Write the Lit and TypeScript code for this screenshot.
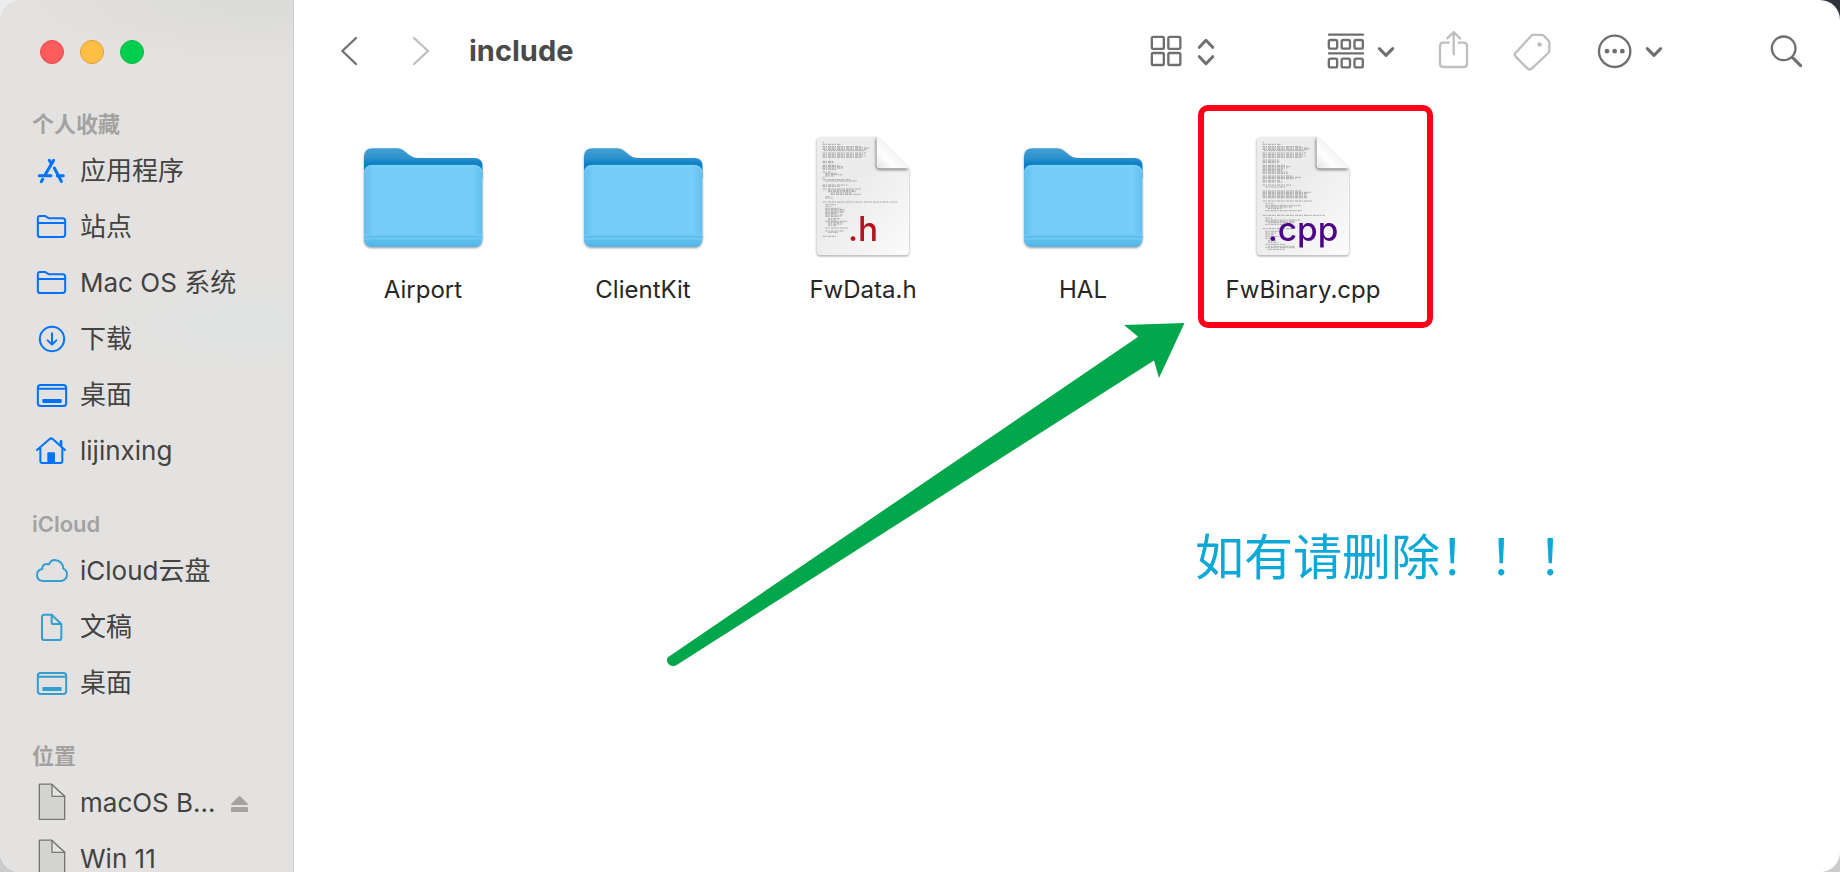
import { LitElement, html, svg, css, nothing, type TemplateResult } from "lit";
import { customElement, property } from "lit/decorators.js";

type Glyph = { box: string; art: TemplateResult };

const desktopGlyph: Glyph = {
  box: "108 267 96 96",
  art: svg`<rect x="113.500" y="285" width="85" height="63" rx="8"/><path d="M114 296H198"/><rect x="127" y="327" width="58" height="12" rx="2" fill="currentColor" stroke="none"/>`,
};

const folderGlyph: Glyph = {
  box: "108 633 96 96",
  art: svg`<path d="M113.500 704V655Q113.500 648 121 648H134Q137 648 140 651L143 653Q145 654.500 149 654.500H188Q195.500 654.500 195.500 662V703Q195.500 711 188 711H121Q113.500 711 113.500 704ZM114 669H195"/>`,
};

const diskGlyph: Glyph = {
  box: "108 621 96 96",
  art: svg`<path d="M118 612.500H155L194 649V718H118Z" fill="#d3d3d1" stroke-width="4"/><path d="M156 613V649H194Q174 633 156 613Z" fill="#e4e3e1" stroke-width="4"/>`,
};

const sideGlyphs: Record<string, Glyph> = {
  apps: {
    box: "108 465 96 96",
    art: svg`<g stroke-width="9"><path d="M148 481L153 489M161 481L135 525M163 504L184 544M118 527H153M172 527H190M128 538L124 545"/></g>`,
  },
  folder: folderGlyph,
  download: {
    box: "108 99 96 96",
    art: svg`<circle cx="156" cy="147" r="36.500"/><path d="M156 130V162M143 151L156 164L169 151"/>`,
  },
  desktop: desktopGlyph,
  home: {
    box: "108 435 96 96",
    art: svg`<path d="M111 480L149 447Q153.500 443 158 447L195 480M121 474V513Q121 519 127 519H181Q187 519 187 513V474"/><path d="M183 466V454" stroke-width="8"/><path d="M142 519V490Q142 487 145 487H162Q165 487 165 490V519Z" fill="currentColor" stroke="none"/>`,
  },
  cloud: {
    box: "108 795 96 96",
    art: svg`<path d="M128 873Q111 871 111 855Q112 839 127 837Q126 824 138 822Q143 821 147 823Q153 809 165 810Q188 812 190 836Q201 841 201 853Q201 870 184 873Z"/>`,
  },
  paper: {
    box: "108 93 96 96",
    art: svg`<path d="M126 173V111Q126 104 133 104H155L184 132V173Q184 180 177 180H133Q126 180 126 173ZM155 104V128Q155 132 160 132H184"/>`,
  },
  disk: diskGlyph,
};

const chevronDown = svg`<path d="M784 146L804 166L824 146" stroke-width="9"/>`;

const barGlyphs: Record<string, Glyph> = {
  back: { box: "117 93 120 120", art: svg`<path d="M198 114L157 153L198 192"/>` },
  forward: { box: "333 93 120 120", art: svg`<path d="M372 114L414 153L372 192"/>` },
  grid: {
    box: "81 93 120 120",
    art: svg`<rect x="98.500" y="110.500" width="36" height="36" rx="4"/><rect x="148" y="110.500" width="36" height="36" rx="4"/><rect x="98.500" y="159" width="36" height="36" rx="4"/><rect x="148" y="159" width="36" height="36" rx="4"/>`,
  },
  updown: { box: "228 93 60 120", art: svg`<path d="M238 142L258 121L278 142M238 170L258 191L278 170" stroke-width="9"/>` },
  group: {
    box: "621 93 120 120",
    art: svg`<path d="M630 104H732M630 160H732"/>${[629.5, 668, 706.5].map(
      (x) => svg`<rect x=${x} y="120" width="25" height="26" rx="5"/><rect x=${x} y="176" width="25" height="26" rx="5"/>`,
    )}`,
  },
  chevron: { box: "774 93 60 120", art: chevronDown },
  share: {
    box: "948 93 120 120",
    art: svg`<path d="M992 128H976Q966 128 966 138V191Q966 201 976 201H1037Q1047 201 1047 191V138Q1047 128 1037 128H1022M1007 163V97M988 115L1007 96L1026 115"/>`,
  },
  tag: {
    box: "96 93 120 120",
    art: svg`<path d="M158 104.500H184Q188 104.500 191 107L205 121Q208 124 208 128V151Q208 156 205 159L155 206Q149 210 143 206L107 170Q101 164 107 158L154 107Q156 104.500 158 104.500Z"/><circle cx="179" cy="133.500" r="7" fill="currentColor" stroke="none"/>`,
  },
  more: {
    box: "342 93 120 120",
    art: svg`<circle cx="404" cy="154" r="47"/>${[381, 404, 427].map(
      (x) => svg`<circle cx=${x} cy="153.500" r="7" fill="currentColor" stroke="none"/>`,
    )}`,
  },
  search: {
    box: "858 93 120 120",
    art: svg`<circle cx="911" cy="145" r="35.500"/><path d="M937 172L962 197" stroke-width="9"/>`,
  },
};

interface Place {
  label: string;
  icon: string;
  eject?: boolean;
}

const sections: { title: string; tone: string; places: Place[] }[] = [
  {
    title: "个人收藏",
    tone: "blue",
    places: [
      { label: "应用程序", icon: "apps" },
      { label: "站点", icon: "folder" },
      { label: "Mac OS 系统", icon: "folder" },
      { label: "下载", icon: "download" },
      { label: "桌面", icon: "desktop" },
      { label: "lijinxing", icon: "home" },
    ],
  },
  {
    title: "iCloud",
    tone: "cyan",
    places: [
      { label: "iCloud云盘", icon: "cloud" },
      { label: "文稿", icon: "paper" },
      { label: "桌面", icon: "desktop" },
    ],
  },
  {
    title: "位置",
    tone: "gray",
    places: [
      { label: "macOS B...", icon: "disk", eject: true },
      { label: "Win 11", icon: "disk" },
    ],
  },
];

/* Each run is [top, left, width] of one line of miniature source code. */
const headerLines: number[][] = [
  [95, 190, 5], [100, 190, 56], [107, 190, 118], [111, 190, 140], [115, 190, 132], [119, 194, 122],
  [126, 190, 130], [131, 190, 124], [135, 190, 128], [139, 190, 118],
  [151, 190, 32], [155, 190, 32], [163, 190, 48], [167, 190, 62], [171, 190, 62], [175, 190, 40],
  [183, 190, 24], [187, 198, 36], [191, 198, 50], [195, 198, 24], [199, 190, 6],
  [206, 190, 84], [210, 198, 96], [222, 190, 74], [226, 190, 50],
  [234, 190, 116], [238, 206, 80], [242, 206, 84], [246, 214, 64], [250, 214, 92], [257, 198, 16], [261, 198, 22],
  [273, 190, 226], [281, 198, 32], [286, 198, 18], [292, 198, 46], [296, 198, 56], [300, 198, 58], [304, 198, 56], [308, 198, 36], [312, 198, 54], [316, 198, 46],
  [323, 206, 36], [327, 206, 24], [331, 198, 66], [335, 206, 46], [339, 206, 44], [343, 206, 26], [351, 198, 68], [360, 198, 56], [364, 206, 30], [376, 190, 44],
];
const sourceLines: number[][] = [
  [95, 190, 5], [100, 190, 56], [107, 190, 118], [111, 190, 140], [115, 190, 138], [119, 194, 122],
  [126, 190, 130], [131, 190, 124], [135, 190, 128], [139, 190, 118],
  [147, 190, 48], [151, 190, 50], [155, 190, 48], [163, 190, 70], [167, 190, 84], [171, 190, 74], [175, 190, 62], [179, 190, 58], [183, 190, 74], [187, 190, 76],
  [195, 190, 90], [199, 190, 116], [203, 190, 98], [209, 190, 52], [213, 190, 60], [222, 190, 86], [228, 198, 62],
  [240, 190, 118], [244, 190, 146], [248, 190, 136], [252, 190, 128], [256, 190, 132], [260, 190, 136],
  [270, 190, 148], [278, 198, 24], [284, 198, 106], [288, 198, 82], [292, 206, 44], [299, 198, 110],
  [313, 190, 186], [321, 198, 20], [327, 198, 104], [331, 198, 90], [335, 206, 78], [340, 198, 60],
  [353, 190, 90], [361, 198, 44], [366, 198, 32], [371, 198, 24], [376, 198, 50], [382, 198, 18], [389, 206, 24], [394, 206, 28], [400, 198, 60], [406, 206, 80], [410, 198, 90], [415, 206, 50],
];

@customElement("line-glyph")
export class LineGlyph extends LitElement {
  @property({ attribute: false }) glyph!: Glyph;
  @property({ type: Number }) stroke = 6;

  static styles = css`
    :host { display: flex; flex: none; }
    svg {
      display: block; width: 100%; height: 100%; overflow: visible;
      fill: none; stroke: currentColor; stroke-linecap: round; stroke-linejoin: round;
    }
  `;

  render() {
    return html`<svg viewBox=${this.glyph.box} stroke-width=${this.stroke} aria-hidden="true">${this.glyph.art}</svg>`;
  }
}

@customElement("folder-art")
export class FolderArt extends LitElement {
  static styles = css`
    :host { display: block; }
    svg { display: block; width: 128px; height: 128px; overflow: visible; filter: drop-shadow(0 1px 1px #0006); }
  `;

  render() {
    return html`<svg viewBox="60 63 384 384" aria-hidden="true">
      <defs>
        <linearGradient id="back" x1="0" y1="112" x2="0" y2="180" gradientUnits="userSpaceOnUse">
          <stop offset="0" stop-color="#439fd6"/><stop offset="0.400" stop-color="#3093ce"/>
          <stop offset="0.700" stop-color="#0b7fc7"/><stop offset="1" stop-color="#0b7fc7"/>
        </linearGradient>
        <linearGradient id="front" x1="75" x2="430" y1="0" y2="0" gradientUnits="userSpaceOnUse">
          <stop offset="0" stop-color="#62bfec"/><stop offset="0.080" stop-color="#75cdf8"/>
          <stop offset="0.920" stop-color="#75cdf8"/><stop offset="1" stop-color="#62bfec"/>
        </linearGradient>
        <linearGradient id="foot" x1="0" y1="366" x2="0" y2="408" gradientUnits="userSpaceOnUse">
          <stop offset="0" stop-color="#6ecaf6"/><stop offset="0.600" stop-color="#5fbeed"/><stop offset="1" stop-color="#51b4e6"/>
        </linearGradient>
      </defs>
      <path d="M75 200V138Q75 112 101 112H176Q188 112 196 120L208 130Q220 141 236 141H406Q430 141 430 165V200Z" fill="url(#back)"/>
      <path d="M75 187Q75 162 101 162H404Q430 162 430 187V382Q430 408 404 408H101Q75 408 75 382Z" fill="url(#front)"/>
      <path d="M75 370H430V382Q430 408 404 408H101Q75 408 75 382Z" fill="url(#foot)"/>
      <path d="M76 372H429M76 384H429" stroke="#79cdf6" stroke-width="2"/>
      <path d="M76 377H429M77 390H428" stroke="#58b8e8" stroke-width="2"/>
      <path d="M77 184Q79 163 101 163H404Q426 163 428 184" fill="none" stroke="#93d9fb" stroke-width="2"/>
    </svg>`;
  }
}

@customElement("source-art")
export class SourceArt extends LitElement {
  @property() ext = "";

  static styles = css`
    :host { display: block; }
    svg { display: block; width: 128px; height: 128px; overflow: visible; filter: drop-shadow(0 1px 1px #0006); }
    .ext { font: 500 100px Inter, "Liberation Sans", sans-serif; text-anchor: middle; }
    .h { fill: #b3141f; }
    .cpp { fill: #4c0585; }
  `;

  render() {
    const lines = this.ext === "h" ? headerLines : sourceLines;
    return html`<svg viewBox="119 63 384 384" aria-hidden="true">
      <defs>
        <linearGradient id="page" x1="0" y1="0" x2="1" y2="1">
          <stop offset="0" stop-color="#ededed"/><stop offset="0.400" stop-color="#ebebeb"/><stop offset="1" stop-color="#fbfbfb"/>
        </linearGradient>
        <linearGradient id="curl" x1="0" y1="1" x2="0.600" y2="0.400">
          <stop offset="0" stop-color="#e2e2e2"/><stop offset="0.500" stop-color="#ffffff"/><stop offset="1" stop-color="#f0f0f0"/>
        </linearGradient>
        <filter id="soft" x="-50%" y="-50%" width="200%" height="200%"><feGaussianBlur stdDeviation="5"/></filter>
        <clipPath id="sheet"><path d="M172 90Q172 78 184 78H353L449 173V421Q449 433 437 433H184Q172 433 172 421Z"/></clipPath>
      </defs>
      <path d="M172 90Q172 78 184 78H353L449 173V421Q449 433 437 433H184Q172 433 172 421Z" fill="url(#page)"/>
      <g stroke="#868686" stroke-width="2" stroke-dasharray="7 2 4 3 9 2">
        ${lines.map(([y, x, w]) => svg`<path d="M${x} ${y}H${x + w}"/>`)}
      </g>
      <g clip-path="url(#sheet)"><path d="M350 78V166Q350 176 360 176H449Z" fill="#0008" filter="url(#soft)"/></g>
      <path d="M353 78V163Q353 171 361 171H446Z" fill="url(#curl)" stroke="#ffffff" stroke-width="2"/>
      <text class="ext ${this.ext}" x="311" y="389">.${this.ext}</text>
    </svg>`;
  }
}

@customElement("place-list")
export class PlaceList extends LitElement {
  static styles = css`
    :host {
      display: block; flex: none; width: 294px; box-sizing: border-box; overflow: hidden;
      border-right: 1px solid #d2d1d0;
      background:
        radial-gradient(ellipse 180px 56px at 250px 325px, #dee2e1, #dee2e100),
        radial-gradient(ellipse 260px 66px at 260px 0, #dadad8, #dadad800),
        #e4e2e0;
      font-size: 26px; color: #434342;
    }
    .lights { display: flex; gap: 16px; padding: 40px 40px 41px; }
    .light { width: 24px; height: 24px; padding: 0; border: 1px solid; border-radius: 50%; }
    .close { background: #ff5c5c; border-color: #e8484b; }
    .min { background: #ffbe44; border-color: #dfa133; }
    .zoom { background: #00cf4d; border-color: #06b94a; }
    h2 { margin: 0; padding-left: 32px; font-size: 22px; line-height: 38px; font-weight: 600; color: #a3a2a1; }
    section + section { margin-top: 26px; }
    ul { margin: 0; padding: 0; list-style: none; }
    li { display: flex; align-items: center; height: 56px; padding: 0 44px 0 36px; }
    a { display: flex; align-items: center; gap: 12px; flex: 1; color: inherit; text-decoration: none; line-height: 56px; white-space: nowrap; }
    line-glyph { width: 32px; height: 32px; }
    .blue line-glyph { color: #0072fb; }
    .cyan line-glyph { color: #329fd0; }
    .gray line-glyph { color: #777775; }
    .eject { width: 19px; height: 20px; padding: 0; border: 0; background: none; color: #a3a2a1; }
    .eject svg { display: block; width: 100%; height: 100%; fill: currentColor; }
  `;

  render() {
    return html`
      <div class="lights">
        <button class="light close" aria-label="关闭"></button>
        <button class="light min" aria-label="最小化"></button>
        <button class="light zoom" aria-label="缩放"></button>
      </div>
      ${sections.map(
        (s) => html`<section class=${s.tone}>
          <h2>${s.title}</h2>
          <ul>
            ${s.places.map(
              (p) => html`<li>
                <a href="#"><line-glyph .glyph=${sideGlyphs[p.icon]}></line-glyph><span>${p.label}</span></a>
                ${p.eject
                  ? html`<button class="eject" aria-label="推出"><svg viewBox="0 0 19 20"><path d="M1 11L8.500 3.400Q9.500 2.400 10.500 3.400L18 11Q18 12 17 12H2Q1 12 1 11Z"/><rect x="1" y="14" width="17" height="5" rx="1"/></svg></button>`
                  : nothing}
              </li>`,
            )}
          </ul>
        </section>`,
      )}
    `;
  }
}

@customElement("tool-bar")
export class ToolBar extends LitElement {
  static styles = css`
    :host { display: flex; align-items: center; height: 102px; padding: 0 34px 0 35px; color: #6f6f6f; }
    button { display: flex; align-items: center; gap: 10px; padding: 0; border: 0; background: none; color: inherit; font: inherit; }
    button:disabled { color: #bfbfbf; }
    nav { display: flex; gap: 32px; }
    h1 { flex: 1; margin: 0 0 0 28px; font-size: 29px; line-height: 40px; font-weight: 700; color: #4a4a4a; }
    line-glyph { width: 40px; height: 40px; }
    .slim { width: 20px; }
    .tools { display: flex; gap: 38px; margin-left: 110px; }
    .actions { margin-left: 4px; }
    .find { margin-left: 102px; }
  `;

  private icon(name: string, slim = false) {
    return html`<line-glyph class=${slim ? "slim" : ""} .glyph=${barGlyphs[name]} .stroke=${7}></line-glyph>`;
  }

  render() {
    return html`
      <nav>
        <button aria-label="后退">${this.icon("back")}</button>
        <button aria-label="前进" disabled>${this.icon("forward")}</button>
      </nav>
      <h1>include</h1>
      <button aria-label="显示方式">${this.icon("grid")}${this.icon("updown", true)}</button>
      <div class="tools">
        <button aria-label="分组">${this.icon("group")}${this.icon("chevron", true)}</button>
        <button aria-label="共享" disabled>${this.icon("share")}</button>
        <button aria-label="标签" disabled>${this.icon("tag")}</button>
        <button class="actions" aria-label="操作">${this.icon("more")}${this.icon("chevron", true)}</button>
      </div>
      <button class="find" aria-label="搜索">${this.icon("search")}</button>
    `;
  }
}

@customElement("app-root")
export class AppRoot extends LitElement {
  static styles = css`
    :host {
      display: block; height: 100vh; overflow: hidden;
      font-family: Inter, "Noto Sans CJK SC", sans-serif;
      background:
        linear-gradient(#ececec, #ececec) left top / 50% 50% no-repeat,
        linear-gradient(#2f333c, #2f333c) right top / 50% 50% no-repeat,
        #cbcbcb;
    }
    .window { position: relative; display: flex; height: 100%; border-radius: 20px; overflow: hidden; background: #fff; }
    main { flex: 1; min-width: 0; }
    .files { display: flex; flex-wrap: wrap; margin: 0; padding: 30px 19px 0; list-style: none; }
    .files li { position: relative; width: 220px; }
    .file {
      display: flex; flex-direction: column; align-items: center; gap: 14px; width: 100%;
      padding: 0; border: 0; background: none; font-family: inherit; font-size: 24px; line-height: 32px; color: #262626;
    }
    .mark { position: absolute; left: 5px; top: -27px; width: 235px; height: 223px; box-sizing: border-box; border: 6px solid #ff0019; border-radius: 10px; pointer-events: none; }
    .arrow { position: absolute; left: 660px; top: 320px; width: 530px; height: 350px; fill: #02a64b; pointer-events: none; }
    .note { position: absolute; left: 1195px; top: 518px; margin: 0; font-family: "Noto Sans CJK SC", sans-serif; font-size: 49px; line-height: 72px; font-weight: 400; color: #0ba8d8; white-space: nowrap; }
  `;

  private files = [
    { name: "Airport", ext: "" },
    { name: "ClientKit", ext: "" },
    { name: "FwData.h", ext: "h" },
    { name: "HAL", ext: "" },
    { name: "FwBinary.cpp", ext: "cpp", marked: true },
  ];

  render() {
    return html`<div class="window">
      <place-list></place-list>
      <main>
        <tool-bar></tool-bar>
        <ul class="files">
          ${this.files.map(
            (f) => html`<li>
              <button class="file">
                ${f.ext ? html`<source-art .ext=${f.ext}></source-art>` : html`<folder-art></folder-art>`}
                <span>${f.name}</span>
              </button>
              ${f.marked ? html`<div class="mark"></div>` : nothing}
            </li>`,
          )}
        </ul>
      </main>
      <svg class="arrow" viewBox="660 320 530 350" aria-hidden="true">
        <path d="M1184.500 323L1159 378L1154 360.500L677.500 664.500Q672 668 668.500 664Q665 659 669 656.500L1138.200 336.700L1124 325Z"/>
      </svg>
      <p class="note">如有请删除！！！</p>
    </div>`;
  }
}
